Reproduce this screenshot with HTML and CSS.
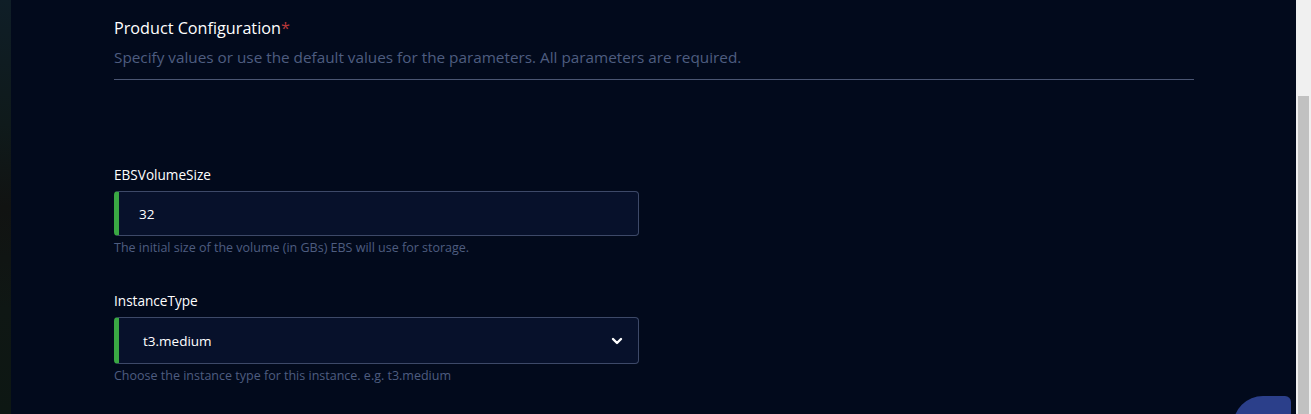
FILE: index.html
```html
<!DOCTYPE html>
<html lang="en">
<head>
<meta charset="utf-8">
<title>Product Configuration</title>
<link rel="stylesheet" href="styles.css">
</head>
<body>
<div class="app">
  <div class="side-strip"></div>
  <main class="main">
    <section class="config">
      <header class="config-head">
        <h2 class="config-title">Product Configuration<span class="req">*</span></h2>
        <p class="config-sub">Specify values or use the default values for the parameters. All parameters are required.</p>
      </header>
      <div class="fields">
        <div class="field">
          <label class="field-label">EBSVolumeSize</label>
          <div class="input-box">
            <span class="input-value">32</span>
          </div>
          <p class="field-help">The initial size of the volume (in GBs) EBS will use for storage.</p>
        </div>
        <div class="field">
          <label class="field-label">InstanceType</label>
          <div class="input-box select-box">
            <span class="input-value">t3.medium</span>
            <svg class="chev" width="12" height="8" viewBox="0 0 12 8"><path d="M2 2 L6 6 L10 2" fill="none" stroke="#ffffff" stroke-width="2.4" stroke-linecap="round" stroke-linejoin="round"/></svg>
          </div>
          <p class="field-help">Choose the instance type for this instance. e.g. t3.medium</p>
        </div>
      </div>
    </section>
    <div class="fab"></div>
  </main>
  <div class="scrollbar"><div class="thumb"></div></div>
</div>
</body>
</html>
```
FILE: styles.css
```css
* { box-sizing: border-box; }
html, body { margin: 0; padding: 0; height: 100%; overflow: hidden; }
body { font-family: "Open Sans", "Noto Sans", sans-serif; background: #020a1c; color: #ffffff; }
.app { display: flex; height: 414px; }
.side-strip {
  width: 11px;
  background: linear-gradient(to bottom, #0f1e27 0%, #0f1a1b 30%, #111312 50%, #0f1714 75%, #0d1713 100%);
}
.main { flex: 1; position: relative; background: #020a1c; padding: 0 102px 0 103px; }
.config-head { padding-top: 16px; border-bottom: 1px solid #4a5572; padding-bottom: 12px; }
.config-title { margin: 0; font-size: 16.2px; font-weight: 500; line-height: 24px; color: #ffffff; }
.req { color: #b8383a; }
.config-sub { margin: 7px 0 0; font-size: 15.3px; line-height: 20px; color: #4e5d80; }
.fields { padding-top: 86px; display: flex; flex-direction: column; gap: 36px; }
.field { width: 525px; }
.field-label { display: block; font-size: 13.6px; line-height: 18px; color: #ffffff; margin-bottom: 7px; }
.input-box {
  height: 45px;
  display: flex; align-items: center;
  background: #07112b;
  border: 1px solid #3d4968;
  border-left: 5px solid #3aa843;
  border-radius: 4px;
  padding: 0 15px 0 20px;
}
.select-box { height: 47px; justify-content: space-between; padding-left: 24px; }
.input-value { font-size: 13.5px; color: #ffffff; }
.chev { display: block; }
.field-help { margin: 4px 0 0; font-size: 12.5px; line-height: 16px; color: #4e5d80; }
.fab {
  position: absolute; right: 5px; bottom: -20px;
  width: 58px; height: 38px;
  background: #2b3f8a;
  border-radius: 30px 6px 0 0;
}
.scrollbar { width: 15px; background: #f0f0f0; position: relative; }
.thumb { position: absolute; left: 2px; right: 2px; top: 96px; bottom: 0; background: #c1c1c1; }
```
